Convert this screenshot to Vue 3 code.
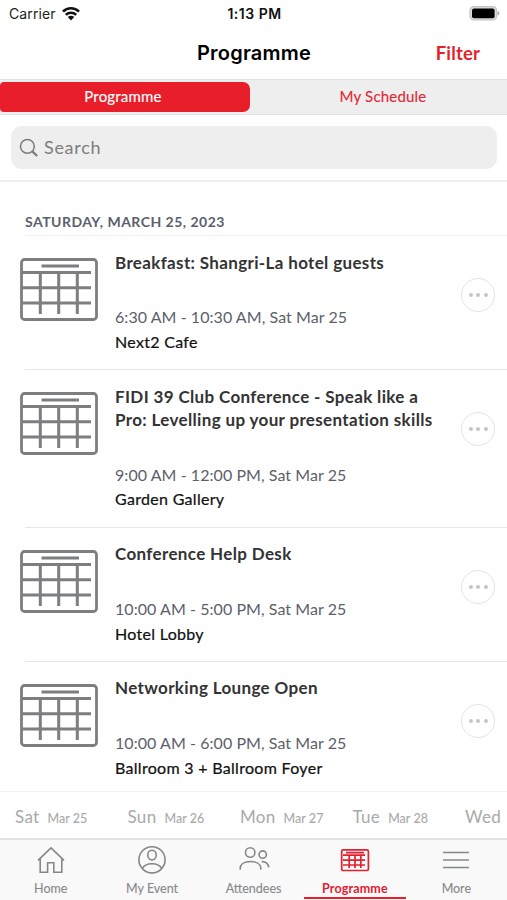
<script setup>
const items = [
  { title: ['Breakfast: Shangri-La hotel guests'], time: '6:30 AM - 10:30 AM, Sat Mar 25', place: 'Next2 Cafe' },
  {
    title: ['FIDI 39 Club Conference - Speak like a', 'Pro: Levelling up your presentation skills'],
    time: '9:00 AM - 12:00 PM, Sat Mar 25',
    place: 'Garden Gallery',
  },
  { title: ['Conference Help Desk'], time: '10:00 AM - 5:00 PM, Sat Mar 25', place: 'Hotel Lobby' },
  { title: ['Networking Lounge Open'], time: '10:00 AM - 6:00 PM, Sat Mar 25', place: 'Ballroom 3 + Ballroom Foyer' },
]
const days = [
  { day: 'Sat', date: 'Mar 25' },
  { day: 'Sun', date: 'Mar 26' },
  { day: 'Mon', date: 'Mar 27' },
  { day: 'Tue', date: 'Mar 28' },
  { day: 'Wed', date: '' },
]
const tabs = [
  { id: 'home', label: 'Home' },
  { id: 'me', label: 'My Event' },
  { id: 'people', label: 'Attendees' },
  { id: 'programme', label: 'Programme' },
  { id: 'more', label: 'More' },
]
</script>

<template>
  <div class="screen">
    <div class="status">
      <div class="carrier">
        <span>Carrier</span>
        <svg width="18" height="14" viewBox="0 0 18 14">
          <g fill="none" stroke="#111" stroke-width="2.5">
            <path d="M1 4.600a11.400 11.400 0 0 1 16 0" />
            <path d="M3.800 7.800a7.400 7.400 0 0 1 10.400 0" />
          </g>
          <path d="M5.800 10.100a4.600 4.600 0 0 1 6.400 0L9 13.400z" fill="#111" />
        </svg>
      </div>
      <div class="clock">1:13 PM</div>
      <div class="battery">
        <svg width="31" height="15" viewBox="0 0 31 15">
          <rect x="1" y=".6" width="26.600" height="13.400" rx="4" fill="#dcdcdc" stroke="#c2c2c2" stroke-width="1.200" />
          <rect x="3" y="2.400" width="22.600" height="9.800" rx="2" fill="#000" />
          <path d="M28.600 5c2.400.8 2.400 3.800 0 4.600z" fill="#aaa" />
        </svg>
      </div>
    </div>

    <div class="nav">
      <h1>Programme</h1>
      <span class="filter">Filter</span>
    </div>

    <div class="segments">
      <div class="segment active">Programme</div>
      <div class="segment">My Schedule</div>
    </div>

    <div class="search-row">
      <div class="search">
        <svg width="20" height="20" viewBox="0 0 20 20" fill="none" stroke="#7d7d7d">
          <circle cx="8.400" cy="8.400" r="6.900" stroke-width="1.600" />
          <path d="M13.300 13.300l4.900 4.700" stroke-width="2.400" />
        </svg>
        <span>Search</span>
      </div>
    </div>

    <div class="list">
      <div class="group">SATURDAY, MARCH 25, 2023</div>
      <div v-for="(item, i) in items" :key="i" class="item">
        <svg class="calendar" width="78" height="63" viewBox="0 0 78 63" fill="none" stroke="#7c7e80" stroke-width="3">
          <rect x="1.500" y="1.500" width="75" height="60" rx="3" stroke-width="2.800" />
          <path d="M21.500 8h37.500M2 14.400h69M2 29.700h69M2 45.100h69M20.300 15v41M38.700 15v41M57.300 15v41" />
        </svg>
        <div class="details">
          <div class="title">
            <div v-for="line in item.title" :key="line">{{ line }}</div>
          </div>
          <div class="time">{{ item.time }}</div>
          <div class="place">{{ item.place }}</div>
        </div>
        <div class="more">
          <i></i><i></i><i></i>
        </div>
      </div>
    </div>

    <div class="days">
      <div v-for="d in days" :key="d.day" class="day">
        <span class="name">{{ d.day }}</span>
        <span class="date">{{ d.date }}</span>
      </div>
    </div>

    <div class="tabs">
      <div v-for="t in tabs" :key="t.id" class="tab" :class="{ current: t.id === 'programme' }">
        <svg width="32" height="30" viewBox="0 0 32 30" fill="none" stroke="currentColor" stroke-width="1.600">
          <path v-if="t.id === 'home'" d="M3 15.300L16 2.800l13 12.500M5.200 13.500v13.700h7.400V17.700h6.200v9.500h8V13.500" />
          <g v-else-if="t.id === 'me'">
            <circle cx="16" cy="14.800" r="13.100" />
            <ellipse cx="16" cy="10.100" rx="4.200" ry="4.900" />
            <path d="M6.200 23.500c2-3 5.600-4.700 9.800-4.700s7.800 1.700 9.800 4.700" />
          </g>
          <g v-else-if="t.id === 'people'">
            <circle cx="12.200" cy="7.500" r="4.700" />
            <path d="M2.200 24.800v-1.300c0-4.400 4.200-7 10.200-7s10.400 2.600 10.400 7v1.300" />
            <circle cx="24.700" cy="9.600" r="3.700" />
            <path d="M23.700 16.600c4.300-.3 6.900 2.300 6.900 5.900" />
          </g>
          <g v-else-if="t.id === 'programme'">
            <rect x="2.700" y="4.900" width="26.700" height="20.600" rx="1.500" stroke-width="1.700" />
            <path d="M7 7.600h18M4 10.200h22M4 15.100h22M4 20h22M10.200 10.200v12.800M16 10.200v12.800M21.800 10.200v12.800" stroke-width="1.700" />
          </g>
          <path v-else d="M3 7.500h26M3 15h26M3 22.500h26" stroke-width="1.700" />
        </svg>
        <span>{{ t.label }}</span>
      </div>
    </div>
  </div>
</template>

<style>
body {
  margin: 0;
  background: #fff;
}
</style>

<style scoped>
.screen {
  width: 507px;
  height: 900px;
  display: flex;
  flex-direction: column;
  overflow: hidden;
  background: #fff;
  color: #111;
  font-family: Lato, sans-serif;
}
.screen > * {
  flex-shrink: 0;
  box-sizing: border-box;
}
.status {
  height: 27px;
  display: grid;
  grid-template-columns: 1fr auto 1fr;
  align-items: center;
  padding: 0 7px 0 9px;
  font: 400 14px/27px Inter, sans-serif;
}
.carrier {
  display: flex;
  align-items: center;
  gap: 6px;
  letter-spacing: 0.100px;
  color: #222;
}
.clock {
  font-weight: 600;
  letter-spacing: 0.500px;
}
.battery {
  display: flex;
  justify-content: flex-end;
}
.nav {
  height: 52px;
  display: grid;
  grid-template-columns: 1fr auto 1fr;
  align-items: center;
  padding: 0 27px 0 28px;
}
.nav h1 {
  grid-column: 2;
  margin: 0;
  font: 600 20px/50px Inter, sans-serif;
  letter-spacing: 0.200px;
  color: #000;
}
.filter {
  justify-self: end;
  font-weight: 700;
  font-size: 18.500px;
  letter-spacing: 0.150px;
  color: #e61e2a;
}
.segments {
  height: 36px;
  display: flex;
  padding: 2px 0;
  background: #eee;
  border-top: 1px solid #e2e2e2;
  border-bottom: 1px solid #e2e2e2;
}
.segment {
  flex: 1;
  padding-left: 9px;
  text-align: center;
  font-size: 15px;
  line-height: 29px;
  letter-spacing: 0.200px;
  -webkit-text-stroke: 0.150px currentColor;
  color: #e22937;
}
.segment.active {
  flex: 0 0 250px;
  box-sizing: border-box;
  padding: 0 4px 0 0;
  border-radius: 4px 7px 7px 4px;
  background: #e81e2a;
  color: #fff;
}
.search-row {
  height: 67px;
  padding: 11px 10px 0 11px;
  border-bottom: 2px solid #eee;
}
.search {
  height: 43px;
  display: flex;
  align-items: center;
  gap: 5px;
  padding-left: 8px;
  border-radius: 11px;
  background: #eee;
  font-size: 18px;
  line-height: 42px;
  letter-spacing: 0.700px;
  color: #7d7d7d;
}
.search span {
  padding-bottom: 2px;
}
.list {
  height: 609px;
  overflow: hidden;
}
.group {
  height: 54px;
  box-sizing: border-box;
  margin-left: 25px;
  padding-top: 30px;
  border-bottom: 1px solid #eee;
  font-size: 14px;
  font-weight: 700;
  line-height: 20px;
  letter-spacing: 0.480px;
  color: #5b5f6b;
}
.item {
  display: flex;
  align-items: flex-start;
  padding: 14.500px 12px 15.700px 20px;
  position: relative;
}
.item::after {
  content: '';
  position: absolute;
  left: 25px;
  right: 0;
  bottom: 0;
  height: 1px;
  background: #e6e6e6;
}
.calendar {
  margin-top: 7.500px;
}
.details {
  flex: 1;
  margin-left: 17px;
  font-size: 16px;
  white-space: nowrap;
}
.title {
  font-size: 17px;
  font-weight: 700;
  line-height: 23.400px;
  letter-spacing: 0.350px;
  color: #333;
}
.time {
  margin-top: 31.500px;
  line-height: 24.500px;
  letter-spacing: 0.060px;
  color: #5b5f6b;
}
.place {
  line-height: 24.500px;
  letter-spacing: 0.300px;
  -webkit-text-stroke: 0.220px currentColor;
  color: #111;
}
.more {
  width: 34px;
  height: 34px;
  box-sizing: border-box;
  margin-top: 27.500px;
  display: flex;
  align-items: center;
  justify-content: center;
  gap: 3.500px;
  border: 1px solid #e4e4e4;
  border-radius: 50%;
}
.more i {
  width: 4px;
  height: 4px;
  border-radius: 50%;
  background: #c4c4c4;
}
.days {
  height: 47px;
  display: flex;
  padding-left: 15px;
  border-top: 1px solid #f2f2f2;
  overflow: hidden;
  color: #a9a9a9;
}
.day {
  flex: 0 0 112.500px;
  display: flex;
  align-items: baseline;
  gap: 8px;
  line-height: 49px;
}
.name {
  font-size: 17px;
  letter-spacing: 0.300px;
}
.date {
  font-size: 12.500px;
  letter-spacing: 0.050px;
  -webkit-text-stroke: 0.100px currentColor;
}
.tabs {
  height: 62px;
  display: flex;
  background: #f9f9f9;
  border-top: 2px solid #e2e2e2;
}
.tab {
  flex: 1;
  display: flex;
  flex-direction: column;
  align-items: center;
  padding-top: 5px;
  font-size: 12.500px;
  line-height: 27px;
  color: #858889;
  -webkit-text-stroke: 0.100px currentColor;
}
.tab svg {
  display: block;
  flex-shrink: 0;
}
.tab.current {
  color: #e22030;
  font-weight: 700;
  letter-spacing: 0.150px;
  -webkit-text-stroke: 0;
  background: linear-gradient(#e22030, #e22030) 0 57px / 100% 2px no-repeat;
}
</style>
